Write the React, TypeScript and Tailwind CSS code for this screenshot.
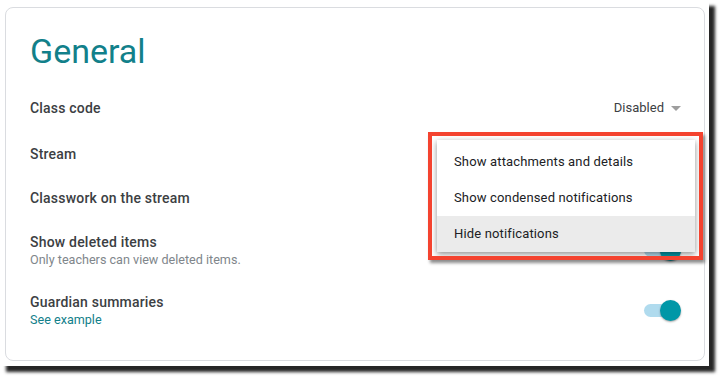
function Toggle() {
  return (
    <div className="relative w-[37px] h-[21px] shrink-0">
      <div className="absolute left-0 top-[4px] w-[34px] h-[13px] rounded-full bg-[#b0dbee]" />
      <div className="absolute right-0 top-0 w-[21px] h-[21px] rounded-full bg-[#0097a7] shadow-[0_1px_2px_rgba(0,0,0,0.35)]" />
    </div>
  );
}

export default function App() {
  return (
    <div className="w-[721px] h-[378px] bg-white font-[Roboto,sans-serif]">
      <div className="relative w-[709px] h-[366px] bg-white pt-[7px] pl-[5px] shadow-[6px_6px_3px_rgba(0,0,0,0.85)]">

        {/* Settings card */}
        <div className="w-[700px] h-[354px] border border-[#dadce0] rounded-lg pt-[23px] pl-6 pr-[23px]">
          <h1 className="text-[34px] leading-10 font-normal text-[#12808a]">General</h1>

          <div className="flex items-center justify-between h-5 mt-[27px]">
            <span className="text-sm font-medium tracking-[0.2px] text-[#3c4043]">Class code</span>
            <div className="flex items-center gap-[7px] text-[13px] text-[#3c4043]">
              <span>Disabled</span>
              <svg width="10" height="5" viewBox="0 0 10 5"><path d="M0 0h10L5 5z" fill="#9e9e9e" /></svg>
            </div>
          </div>

          <div className="flex items-center justify-between h-5 mt-[26px]">
            <span className="text-sm font-medium tracking-[0.2px] text-[#3c4043]">Stream</span>
          </div>

          <div className="flex items-center justify-between h-5 mt-6">
            <span className="text-sm font-medium tracking-[0.2px] text-[#3c4043]">Classwork on the stream</span>
          </div>

          <div className="flex items-center justify-between mt-6">
            <div className="flex flex-col">
              <span className="text-sm leading-5 font-medium tracking-[0.2px] text-[#3c4043]">Show deleted items</span>
              <span className="text-[12.6px] leading-4 text-[#80868b]">Only teachers can view deleted items.</span>
            </div>
            <Toggle />
          </div>

          <div className="flex items-center justify-between mt-6">
            <div className="flex flex-col">
              <span className="text-sm leading-5 font-medium tracking-[0.2px] text-[#3c4043]">Guardian summaries</span>
              <span className="text-[12.6px] leading-4 text-[#12808a]">See example</span>
            </div>
            <Toggle />
          </div>
        </div>

        {/* Stream dropdown menu */}
        <div className="absolute left-[437px] top-[140px] w-[258px] pt-1 bg-white shadow-[0_2px_6px_rgba(0,0,0,0.45)]">
          {['Show attachments and details', 'Show condensed notifications', 'Hide notifications'].map((item, i) => (
            <div key={item} className={`h-9 flex items-center pl-[17px] text-[13px] tracking-[0.15px] text-[#202124] ${i === 2 ? 'bg-[#ebebeb]' : ''}`}>
              {item}
            </div>
          ))}
        </div>

        {/* Annotation frame */}
        <div className="absolute left-[428px] top-[132px] w-[275px] h-[128px] border-4 border-[#f4432f] shadow-[2px_3px_3px_rgba(0,0,0,0.45)]" />
      </div>
    </div>
  );
}
